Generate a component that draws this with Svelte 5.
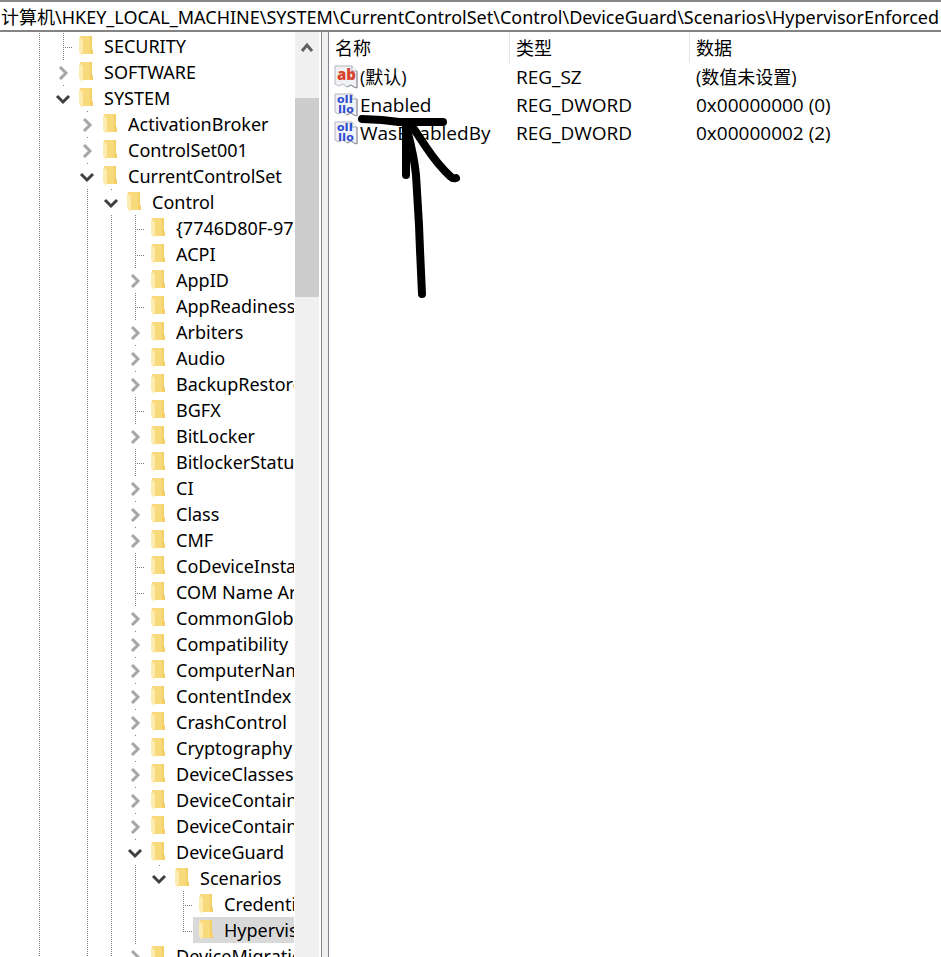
<script>
    const keyPath = [
        '计算机',
        'HKEY_LOCAL_MACHINE',
        'SYSTEM',
        'CurrentControlSet',
        'Control',
        'DeviceGuard',
        'Scenarios',
        'HypervisorEnforcedCodeIntegrity'
    ];
    let address = $state(keyPath.join('\\'));

    // guides: one character per ancestor level, "|" draws a line, "." leaves a gap
    // state: leaf, last (leaf at the end of its branch), closed, open
    const control = (name, state = 'closed') => ({ name, state, guides: '|.||' });

    const rows = [
        { name: 'SECURITY', state: 'leaf', guides: '|' },
        { name: 'SOFTWARE', state: 'closed', guides: '|' },
        { name: 'SYSTEM', state: 'open', guides: '|' },
        { name: 'ActivationBroker', state: 'closed', guides: '|.' },
        { name: 'ControlSet001', state: 'closed', guides: '|.' },
        { name: 'CurrentControlSet', state: 'open', guides: '|.' },
        { name: 'Control', state: 'open', guides: '|.|' },
        control('{7746D80F-97E0-4E26-9543-26B41FC22F79}', 'leaf'),
        control('ACPI', 'leaf'),
        control('AppID'),
        control('AppReadiness', 'leaf'),
        control('Arbiters'),
        control('Audio'),
        control('BackupRestore'),
        control('BGFX', 'leaf'),
        control('BitLocker'),
        control('BitlockerStatus', 'leaf'),
        control('CI'),
        control('Class'),
        control('CMF'),
        control('CoDeviceInstallers', 'leaf'),
        control('COM Name Arbiter', 'leaf'),
        control('CommonGlobUserSettings'),
        control('Compatibility'),
        control('ComputerName'),
        control('ContentIndex'),
        control('CrashControl'),
        control('Cryptography'),
        control('DeviceClasses'),
        control('DeviceContainerPropertyUpdateEvents'),
        control('DeviceContainers'),
        control('DeviceGuard', 'open'),
        { name: 'Scenarios', state: 'open', guides: '|.|||' },
        { name: 'CredentialGuard', state: 'leaf', guides: '|.|||.' },
        { name: 'HypervisorEnforcedCodeIntegrity', state: 'last', guides: '|.|||.' },
        control('DeviceMigration')
    ];
    let selected = $state('HypervisorEnforcedCodeIntegrity');

    const values = [
        { name: '(默认)', type: 'REG_SZ', data: '(数值未设置)' },
        { name: 'Enabled', type: 'REG_DWORD', data: '0x00000000 (0)' },
        { name: 'WasEnabledBy', type: 'REG_DWORD', data: '0x00000002 (2)' }
    ];

    const isLeaf = (row) => row.state === 'leaf' || row.state === 'last';
</script>

<div class="regedit">
    <input class="address" aria-label="地址" spellcheck="false" bind:value={address} />

    <div class="panes">
        <nav class="tree">
            <ul>
                {#each rows as row}
                    <li>
                        {#each row.guides as guide}
                            <span class="guide" class:line={guide === '|'}></span>
                        {/each}
                        {#if isLeaf(row)}
                            <span class="branch" class:last={row.state === 'last'}></span>
                        {:else}
                            <button class="toggle" aria-label={row.name} aria-expanded={row.state === 'open'}>
                                <svg width="16" height="16" viewBox="0 0 16 16" class:open={row.state === 'open'}>
                                    {#if row.state === 'open'}
                                        <path d="M2 6l6 6 6-6" />
                                    {:else}
                                        <path d="M5 3l6 6-6 6" />
                                    {/if}
                                </svg>
                            </button>
                        {/if}
                        <button
                            class="key"
                            class:selected={selected === row.name}
                            onclick={() => (selected = row.name)}
                        >
                            <svg width="14" height="20" viewBox="0 0 14 20">
                                <path d="M1 0h12v13l1 1v4H2z" fill="#f8da7c" />
                                <path d="M11 0h2v13l1 1v4h-3z" fill="#f3cf68" />
                                <path d="M0 1l4 3v12l-1 4-3-4z" fill="#fdebb0" />
                            </svg>
                            <span>{row.name}</span>
                        </button>
                    </li>
                {/each}
            </ul>
        </nav>

        <div class="scrollbar">
            <button class="scroll-up" aria-label="向上滚动">
                <svg width="14" height="12" viewBox="0 0 14 12">
                    <path d="M2 9l5-6 5 6" />
                </svg>
            </button>
            <div class="thumb"></div>
        </div>

        <div class="splitter"></div>

        <main class="values">
            <table>
                <thead>
                    <tr>
                        <th class="col">名称</th>
                        <th class="col">类型</th>
                        <th>数据</th>
                    </tr>
                </thead>
                <tbody>
                    {#each values as value}
                        <tr>
                            <td class="name" class:unset={value.type === 'REG_SZ'}>
                                <div>
                                    <svg width="24" height="24" viewBox="0 0 24 24">
                                        <path
                                            d="M1 1h17l5 5v17l-3-1-3-2-4 2-4-3-4 2-4-2z"
                                            fill="#f1f2f6"
                                            stroke="#b4b6bb"
                                        />
                                        <path d="M23 6v17l-3-1-3-2-4 2" fill="none" stroke="#8f9299" />
                                        <path d="M18 1v5h5" fill="#fff" stroke="#a9acb2" />
                                        {#if value.type === 'REG_SZ'}
                                            <text class="string" x="3" y="15">ab</text>
                                        {:else}
                                            <text class="binary" x="3" y="10">oII</text>
                                            <text class="binary" x="4" y="20">IIo</text>
                                        {/if}
                                    </svg>
                                    <span>{value.name}</span>
                                </div>
                            </td>
                            <td>{value.type}</td>
                            <td class:unset={value.type === 'REG_SZ'}>{value.data}</td>
                        </tr>
                    {/each}
                </tbody>
            </table>

            <!-- hand-drawn arrow under "Enabled" -->
            <svg class="marker" width="110" height="190" viewBox="0 0 110 190">
                <path d="M5 8l20 1 17 2h44" />
                <path d="M49 12v52" />
                <path d="M49 14c4 16 8 30 10 50l3 50 1 25 2 44" />
                <path d="M53 12l16 24c8 12 14 20 25 30q2 2 5 1" />
            </svg>
        </main>
    </div>
</div>

<style>
    :global(body) {
        margin: 0;
        background: #fff;
    }

    .regedit {
        display: flex;
        flex-direction: column;
        height: 100vh;
        overflow: hidden;
        color: #000;
        font-family: 'Noto Sans', 'Noto Sans CJK SC', sans-serif;
        font-size: 18px;
        line-height: 26px;
    }

    input,
    button {
        font: inherit;
        color: inherit;
        border: none;
        background: none;
        padding: 0;
        margin: 0;
    }

    .address {
        flex: none;
        box-sizing: border-box;
        width: 100%;
        height: 32px;
        padding: 0 1px;
        border-top: 2px solid #848884;
        border-bottom: 2px solid #848484;
        outline: none;
    }

    .panes {
        display: flex;
        flex: 1;
        min-height: 0;
    }

    /* Key tree */
    .tree {
        flex: none;
        width: 294px;
        overflow: hidden;
    }

    ul {
        list-style: none;
        margin: 0;
        padding: 1px 0 0 27px;
    }

    li {
        display: flex;
        height: 26px;
    }

    .guide {
        flex: none;
        width: 24px;
    }

    .guide.line {
        background: repeating-linear-gradient(#808080 0 1px, transparent 1px 2px) 12px 0 / 1px 100% no-repeat;
    }

    .branch,
    .toggle {
        flex: none;
        width: 22px;
    }

    .branch {
        background:
            repeating-linear-gradient(#808080 0 1px, transparent 1px 2px) 12px 0 / 1px 100% no-repeat,
            repeating-linear-gradient(90deg, #808080 0 1px, transparent 1px 2px) 12px 14px / 12px 1px no-repeat;
    }

    .branch.last {
        background-size: 1px 14px, 12px 1px;
    }

    .toggle {
        display: flex;
        align-items: center;
        padding-left: 4px;
        background: linear-gradient(#808080, #808080) 12px 0 / 1px 1px no-repeat;
    }

    .toggle svg {
        flex: none;
        fill: none;
        stroke: #a6a6a6;
        stroke-width: 3;
    }

    .toggle svg.open {
        stroke: #404040;
    }

    .key {
        display: flex;
        flex: 1 0 auto;
        align-items: center;
        gap: 11px;
        padding-left: 6px;
        white-space: nowrap;
    }

    .key.selected {
        background: #d9d9d9;
    }

    /* Scrollbar and splitter */
    .scrollbar {
        flex: none;
        width: 24px;
        margin-left: 1px;
        background: #f0f0f0;
    }

    .scroll-up {
        display: flex;
        align-items: center;
        justify-content: center;
        width: 100%;
        height: 32px;
    }

    .scroll-up path {
        fill: none;
        stroke: #606060;
        stroke-width: 3;
    }

    .thumb {
        height: 199px;
        margin-top: 34px;
        background: #cdcdcd;
    }

    .splitter {
        flex: none;
        width: 6px;
        margin-left: 2px;
        border: solid #828790;
        border-width: 0 1px;
        background: #f0f0f0;
    }

    /* Value list */
    .values {
        position: relative;
        flex: 1;
        min-width: 0;
    }

    table {
        width: 100%;
        table-layout: fixed;
        border-collapse: collapse;
    }

    th,
    td {
        box-sizing: border-box;
        padding: 0 0 0 6px;
        font-weight: 400;
        text-align: left;
        white-space: nowrap;
    }

    th {
        height: 31px;
    }

    td {
        height: 28px;
        font-family: 'Open Sans', 'Noto Sans CJK SC', sans-serif;
        font-size: 19px;
    }

    td.unset {
        font-size: 18px;
    }

    .col {
        width: 181px;
        background: linear-gradient(#e5e5e5, #e5e5e5) right / 1px 100% no-repeat;
    }

    .col + .col {
        width: 180px;
    }

    .name {
        padding-left: 5px;
    }

    .name div {
        display: flex;
        align-items: center;
        gap: 2px;
    }

    .string {
        fill: #d8452f;
        font-family: 'Open Sans', sans-serif;
        font-size: 15px;
        font-weight: 800;
    }

    .binary {
        fill: #2b4bd0;
        font-family: 'DejaVu Sans', sans-serif;
        font-size: 11px;
        font-weight: 700;
    }

    .marker {
        position: absolute;
        top: 79px;
        left: 28px;
        fill: none;
        stroke: #000;
        stroke-width: 8;
        stroke-linecap: round;
        stroke-linejoin: round;
        pointer-events: none;
    }
</style>
